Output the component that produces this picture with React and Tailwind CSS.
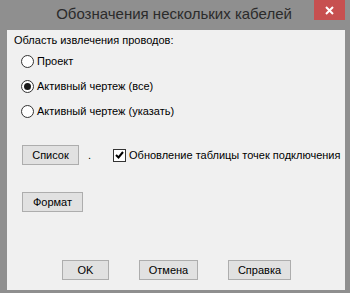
const font = { fontFamily: '"Liberation Sans", Arial, sans-serif' };

const Radio = ({ checked, label }) => (
    <div className="flex items-center h-[13px]">
        <span className="w-[13px] h-[13px] shrink-0 rounded-full border border-[#333] bg-white flex items-center justify-center">
            {checked && <span className="w-[7px] h-[7px] rounded-full bg-[#1a1a1a]"></span>}
        </span>
        <span className="ml-[3px] text-[11px] leading-[13px] text-black">{label}</span>
    </div>
);

const Button = ({ children, className = '' }) => (
    <div className={`h-[20px] shrink-0 flex items-center justify-center bg-[#e1e1e1] border border-[#adadad] text-[11px] text-black ${className}`}>
        {children}
    </div>
);

export default function App() {
    return (
        <div className="w-[350px] h-[293px] bg-[#8f8f8f] flex flex-col pl-[7px] pr-[5px] pb-[3px]" style={font}>
            {/* title bar */}
            <div className="relative h-[30px] flex justify-center">
                <span className="mt-[4px] text-[15px] leading-[20px] text-[#2b2b2b] ml-[-4px]">Обозначения нескольких кабелей</span>
                <div className="absolute right-0 top-0 w-[31px] h-[20px] bg-[#c75050] flex items-center justify-center">
                    <svg width="9" height="9" viewBox="0 0 9 9">
                        <path d="M1 1 L8 8 M8 1 L1 8" stroke="white" strokeWidth="2" />
                    </svg>
                </div>
            </div>

            {/* client area */}
            <div className="flex-1 bg-[#f0f0f0] flex flex-col">
                <div className="mt-[4px] ml-[7px] text-[11px] leading-[13px] text-black">Область извлечения проводов:</div>

                <div className="ml-[14px] mt-[8px] flex flex-col gap-[12px]">
                    <Radio label="Проект" />
                    <Radio checked label="Активный чертеж (все)" />
                    <Radio label="Активный чертеж (указать)" />
                </div>

                <div className="mt-[27px] ml-[15px] flex items-center">
                    <Button className="w-[57px]">Список</Button>
                    <span className="ml-[9px] text-[11px] leading-[13px] text-black">.</span>
                    <span className="ml-[22px] w-[13px] h-[13px] shrink-0 border border-[#333] bg-white flex items-center justify-center">
                        <svg width="9" height="8" viewBox="0 0 9 8">
                            <path d="M1 4 L3.5 6.5 L8 1" stroke="black" strokeWidth="2" fill="none" />
                        </svg>
                    </span>
                    <span className="ml-[3px] text-[11px] leading-[13px] text-black whitespace-nowrap">Обновление таблицы точек подключения</span>
                </div>

                <div className="mt-[27px] ml-[15px] flex">
                    <Button className="w-[61px]">Формат</Button>
                </div>

                <div className="mt-auto mb-[10px] flex ml-[55px]">
                    <Button className="w-[47px] border-[#3399ff]">OK</Button>
                    <Button className="w-[59px] ml-[30px]">Отмена</Button>
                    <Button className="w-[63px] ml-[30px]">Справка</Button>
                </div>
            </div>
        </div>
    );
}
